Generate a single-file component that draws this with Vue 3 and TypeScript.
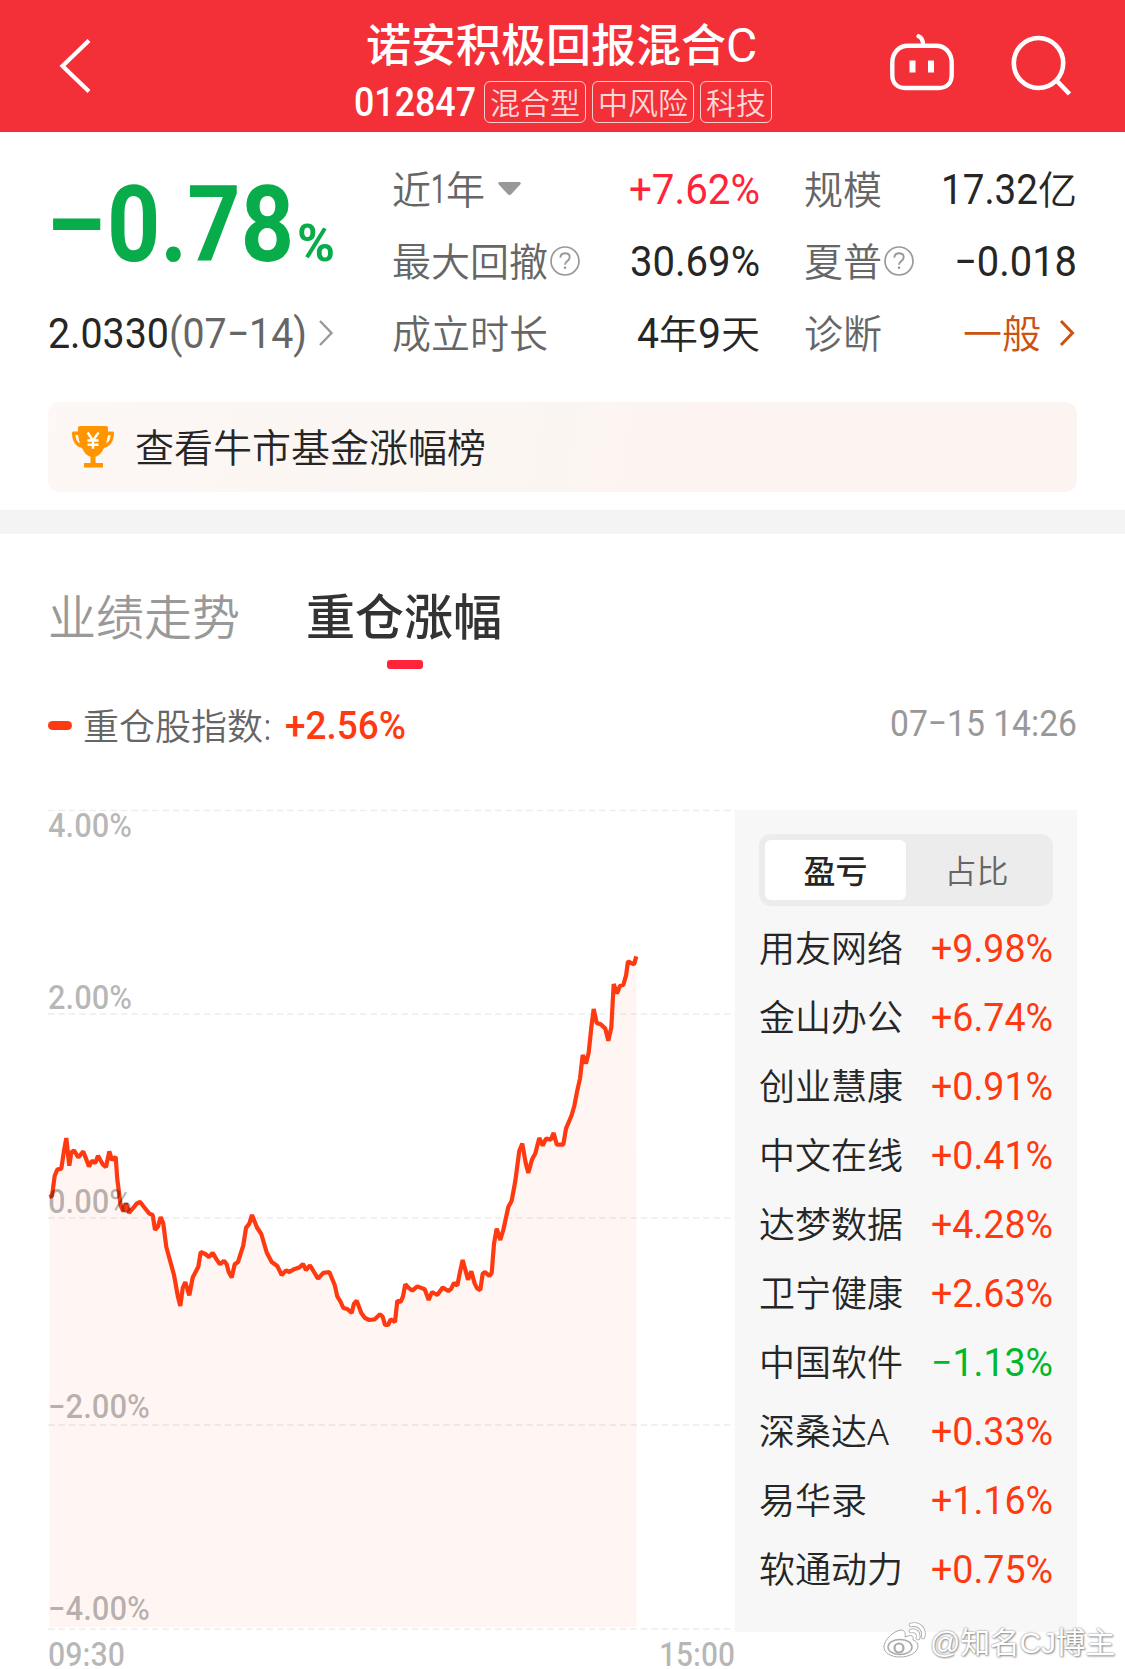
<script setup lang="ts">
import { h } from 'vue'
import type { FunctionalComponent } from 'vue'

interface NumProps {
  t: string
  w: number
  s: number
  b?: number
}

// Numeric label set to a fixed advance width; its box is the height of the digits.
const Num: FunctionalComponent<NumProps> = (props) => {
  const height = Math.round(props.s * 0.711)
  return h('svg', { width: props.w, height, style: 'display:block;overflow:visible;flex:none' }, [
    h(
      'text',
      {
        x: 0,
        y: height,
        'font-family': 'Roboto, "Noto Sans CJK SC", sans-serif',
        'font-size': props.s,
        'font-weight': props.b ?? 400,
        fill: 'currentColor',
        textLength: props.w,
        lengthAdjust: 'spacingAndGlyphs',
      },
      props.t,
    ),
  ])
}
Num.props = ['t', 'w', 's', 'b']

const tags: string[] = ['混合型', '中风险', '科技']

interface Stock {
  name: string
  change: string
}
const stocks: Stock[] = [
  { name: '用友网络', change: '+9.98%' },
  { name: '金山办公', change: '+6.74%' },
  { name: '创业慧康', change: '+0.91%' },
  { name: '中文在线', change: '+0.41%' },
  { name: '达梦数据', change: '+4.28%' },
  { name: '卫宁健康', change: '+2.63%' },
  { name: '中国软件', change: '−1.13%' },
  { name: '深桑达A', change: '+0.33%' },
  { name: '易华录', change: '+1.16%' },
  { name: '软通动力', change: '+0.75%' },
]

const gridLines: number[] = [810.5, 1014, 1218, 1425, 1629]
const axisLabels = [
  { t: '4.00%', y: 837, w: 84 },
  { t: '2.00%', y: 1008.5, w: 84 },
  { t: '0.00%', y: 1213, w: 84 },
  { t: '−2.00%', y: 1418, w: 102 },
  { t: '−4.00%', y: 1620, w: 102 },
]

const line =
  '49.3,1197 52,1196 54.7,1175.7 57.3,1169.6 61.3,1168.6 64,1150.7 66.3,1138 69.3,1165.7 71.3,1152.5 74,1150.4 78.3,1157.5 83.3,1151.4 89,1166.4 92,1160.7 95.3,1162.9 98,1155.7 102.7,1164.3 106,1167 109.3,1151.4 112,1160 115.7,1156.8 117.3,1179.3 120.7,1205.7 123.3,1211.4 126,1203.6 129,1212.9 133.3,1207.9 136.7,1203.6 140,1201.8 144,1207 149.3,1213.6 152.7,1215 155,1230 158,1226.4 160.7,1217 163.3,1223.6 166.3,1247 174,1275 178,1297 180.3,1306 182.7,1288 185.3,1282 189.3,1295.4 192.7,1277.5 198.3,1266.8 200.7,1252 205.3,1254 209,1257 212.7,1252.9 216.7,1259.6 220,1264.3 224,1260.7 226.7,1264.3 228.7,1272 231.7,1277.5 234.7,1264.3 238,1262 243.3,1245.4 246,1227.9 249.3,1223.6 252,1215 257,1227.5 261.3,1234 266.7,1252.5 271.7,1262 277.3,1266 281.7,1275 286,1270.4 289.3,1272 293.3,1269.6 299.3,1267.5 303,1264 306,1270 310,1265.4 314,1272 318,1278.6 323.3,1272.9 329.3,1272 334.7,1285 337.3,1296.4 340.7,1302 343.3,1308 347.3,1309 351.7,1312.9 354,1303.6 356.7,1300.7 361.3,1312.9 365,1318 369.3,1320 374.7,1319.3 380,1314.3 382.7,1316.8 385,1325 388,1325 390.7,1319.3 395,1322 397.3,1300.7 400.7,1302 403,1296.4 405.3,1284.3 408.7,1287.9 412.3,1290.7 417.3,1286.4 424.7,1289.3 428.7,1300 432,1292 437.3,1295 442.7,1287.5 448.3,1291 451.3,1288.6 454,1282.9 457.3,1285.7 460,1272 462.7,1260 468,1279.6 471.3,1271.4 474.7,1283.6 477.3,1288.6 480.3,1290 482.7,1273.6 485,1272 489.3,1276 491.7,1272.9 494,1243.6 496.7,1228.6 500.3,1240 503.3,1230 508.3,1207 511.7,1200.7 515.3,1181 519.3,1150.7 522.3,1143.6 525.7,1163 528.3,1172.9 532,1159.6 535.3,1153.6 539.3,1137.9 542.7,1145.7 546,1138.6 550.7,1139.6 553.7,1132.9 556.7,1144.6 563.3,1144.6 566,1128.6 571.7,1115 574.3,1106 577,1091.8 580,1078.6 582.7,1055 586,1063.6 588.7,1052.5 591.3,1027.5 593.7,1009 596.7,1022.9 600.7,1024.3 605.3,1028.6 608.3,1040.7 611.3,1027.5 613.7,984 617,993.6 620,985.7 623.3,985 626,975.7 628,961.4 634,964.3 636.3,956.4'
const area = `49.3,1627 ${line} 636.6,1627`
</script>

<template>
  <div class="page">
    <header class="header">
      <svg class="back" width="34" height="58" viewBox="0 0 34 58" fill="none" stroke="#fff" stroke-width="4.200">
        <path d="M31 3.500 4.500 29l26.500 25.500" />
      </svg>
      <div class="heading">
        <h1 class="title">诺安积极回报混合<span class="latin">C</span></h1>
        <div class="meta">
          <Num t="012847" :w="122" :s="40" :b="500" />
          <span v-for="tag in tags" :key="tag" class="tag">{{ tag }}</span>
        </div>
      </div>
      <div class="actions">
        <svg class="robot" width="64" height="60" viewBox="0 0 64 60" fill="none" stroke="#fff" stroke-width="4.400">
          <path d="M18 12.700h28c9 0 15.700 7 15.700 17v12c0 8.500-5 13.300-13 13.300H15.300c-8 0-13-4.800-13-13.300v-12c0-10 6.700-17 15.700-17Z" />
          <path d="M28.500 3.200c3.300 1.200 4.600 4 4.600 9" stroke-linecap="round" />
          <path d="M22.500 27.500v12M41 27.500v12" stroke-width="6" />
        </svg>
        <svg width="62" height="62" viewBox="0 0 62 62" fill="none" stroke="#fff" stroke-width="4.600">
          <ellipse cx="28.500" cy="29" rx="24.700" ry="25" />
          <path d="m46 46 13.500 14" />
        </svg>
      </div>
    </header>

    <section class="summary">
      <div class="daily">
        <div class="big">
          <Num t="−" :w="62" :s="105" :b="700" />
          <Num t="0.78" :w="187" :s="105" :b="700" />
          <Num class="percent" t="%" :w="38" :s="51" :b="700" />
        </div>
        <div class="nav">
          <Num t="2.0330" :w="121" :s="42" />
          <Num class="date" t="(07−14)" :w="138" :s="42" />
          <svg class="arrow" width="16" height="28" viewBox="0 0 16 28" fill="none" stroke="#999" stroke-width="2.400">
            <path d="m2 2 11.500 12L2 26" />
          </svg>
        </div>
      </div>

      <div class="stats first">
        <div class="stat">
          <span class="label">近<Num t="1" :w="15" :s="40" />年
            <svg class="caret" width="23" height="14" viewBox="0 0 23 14"><path d="M2 0h19c1.700 0 2.300 1.500 1.200 2.600l-9 9.600c-1 1-2.400 1-3.400 0l-9-9.600C-.3 1.500.3 0 2 0Z" fill="#999" /></svg>
          </span>
          <span class="value up"><Num t="+7.62%" :w="131" :s="42" /></span>
        </div>
        <div class="stat">
          <span class="label">最大回撤
            <svg class="help" width="30" height="30" viewBox="0 0 30 30" fill="none" stroke="#999" stroke-width="1.700"><circle cx="15" cy="15" r="14" /><path d="M10.400 11.800c0-2.700 1.900-4.500 4.700-4.500s4.600 1.700 4.600 4c0 2-1.200 2.900-2.600 4-1.300 1-2 1.700-2 3.400" stroke-width="1.900" /><circle cx="15" cy="21.800" r="1.300" fill="#999" stroke="none" /></svg>
          </span>
          <span class="value"><Num t="30.69%" :w="130" :s="42" /></span>
        </div>
        <div class="stat">
          <span class="label">成立时长</span>
          <span class="value"><Num t="4" :w="22" :s="42" />年<Num t="9" :w="23" :s="42" />天</span>
        </div>
      </div>

      <div class="stats second">
        <div class="stat">
          <span class="label">规模</span>
          <span class="value"><Num t="17.32" :w="97" :s="42" />亿</span>
        </div>
        <div class="stat">
          <span class="label">夏普
            <svg class="help" width="30" height="30" viewBox="0 0 30 30" fill="none" stroke="#999" stroke-width="1.700"><circle cx="15" cy="15" r="14" /><path d="M10.400 11.800c0-2.700 1.900-4.500 4.700-4.500s4.600 1.700 4.600 4c0 2-1.200 2.900-2.600 4-1.300 1-2 1.700-2 3.400" stroke-width="1.900" /><circle cx="15" cy="21.800" r="1.300" fill="#999" stroke="none" /></svg>
          </span>
          <span class="value"><Num t="−0.018" :w="123" :s="42" /></span>
        </div>
        <div class="stat">
          <span class="label">诊断</span>
          <span class="value verdict">一般
            <svg width="16" height="28" viewBox="0 0 16 28" fill="none" stroke="currentColor" stroke-width="3"><path d="m2 2 11.500 12L2 26" /></svg>
          </span>
        </div>
      </div>
    </section>

    <div class="banner">
      <svg width="42" height="42" viewBox="0 0 42 42" fill="#ff9500">
        <path d="M8 0h26c1.200 0 2 .8 2 2v3.500h4.500c1 0 1.500.6 1.500 1.500 0 8-3.500 13.500-10 15-2 4.500-4.800 7.700-8.500 8.800V37H31v4.500H12V37h6.500v-6.200c-3.800-1.100-6.500-4.300-8.500-8.800C3.500 20.500 0 15 0 7c0-.9.600-1.500 1.500-1.500H6V2c0-1.200.8-2 2-2Z" />
        <path d="M3.500 9H6l1.800 8.500C5 16 3.500 13 3.500 9ZM38.500 9H36l-1.800 8.500C37 16 38.500 13 38.500 9Z" fill="#fdf7f4" />
        <path d="m15.500 6.500 5.500 8 5.500-8M15.500 14.500h11M15.500 18.700h11M21 14v8.800" fill="none" stroke="#fff" stroke-width="2.400" />
      </svg>
      <span class="banner-text">查看牛市基金涨幅榜</span>
    </div>
    <div class="gap"></div>

    <nav class="tabs">
      <span class="tab">业绩走势</span>
      <span class="tab active">重仓涨幅</span>
    </nav>

    <div class="legend">
      <i class="dash"></i>
      <span class="legend-name">重仓股指数:</span>
      <Num class="legend-value" t="+2.56%" :w="121" :s="39" :b="500" />
      <Num class="time" t="07−15 14:26" :w="187" :s="37" />
    </div>

    <main class="board">
      <svg class="chart" width="687" height="863" viewBox="48 806 687 863">
        <line v-for="y in gridLines" :key="y" x1="48" x2="735" :y1="y" :y2="y" stroke="#ededed" stroke-width="1.500" stroke-dasharray="6.500 3.900" />
        <polygon :points="area" fill="#ff3910" fill-opacity=".05" />
        <polyline :points="line" fill="none" stroke="#ff3910" stroke-width="4.200" stroke-linejoin="bevel" />
        <g font-family="Roboto, sans-serif" font-size="32.500" font-weight="500" fill="#000" fill-opacity=".29">
          <text v-for="a in axisLabels" :key="a.t" x="48" :y="a.y" :textLength="a.w" lengthAdjust="spacingAndGlyphs">{{ a.t }}</text>
          <text x="48" y="1665.500" textLength="77" lengthAdjust="spacingAndGlyphs">09:30</text>
          <text x="659" y="1665.500" textLength="76" lengthAdjust="spacingAndGlyphs">15:00</text>
        </g>
      </svg>
      <aside class="side">
        <div class="segment">
          <span class="option on">盈亏</span>
          <span class="option">占比</span>
        </div>
        <div v-for="s in stocks" :key="s.name" class="stock">
          <span class="stock-name">{{ s.name }}</span>
          <Num :class="s.change[0] === '+' ? 'gain' : 'loss'" :t="s.change" :w="122" :s="39" />
        </div>
      </aside>
    </main>

    <div class="watermark">
      <svg width="44" height="36" viewBox="0 0 44 36">
        <path d="M18 8C10 9 1 18 1 25c0 6 7 10 16 10 10 0 18-5 18-11 0-3-2-5-5-6 1-4-1-6-8-3 1-5-1-7-4-7Z" fill="#fff" stroke="#aaa" />
        <ellipse cx="17" cy="25" rx="12" ry="7.500" fill="#fff" stroke="#aaa" stroke-width="1.500" />
        <circle cx="16" cy="26" r="4.500" fill="none" stroke="#aaa" stroke-width="2.200" />
        <path d="M28 3c8-2 14 4 12 12M28 9c5-1 8 2 7 7" fill="none" stroke="#aaa" stroke-width="4.600" stroke-linecap="round" />
        <path d="M28 3c8-2 14 4 12 12M28 9c5-1 8 2 7 7" fill="none" stroke="#fff" stroke-width="3" stroke-linecap="round" />
      </svg>
      <span class="handle">@知名CJ博主</span>
    </div>
  </div>
</template>

<style>
body {
  background: #fff;
  overflow: hidden;
}
</style>

<style scoped>
.page {
  position: relative;
  width: 1125px;
  height: 1669px;
  overflow: hidden;
  background: #fff;
  color: #262626;
  font-family: 'Noto Sans', 'Noto Sans CJK SC', sans-serif;
  font-weight: 400;
}
.header {
  box-sizing: border-box;
  display: grid;
  grid-template-columns: 354px 1fr 353px;
  height: 132px;
  background: #f33037;
  color: #fff;
}
.back {
  margin: 37px 0 0 58px;
}
.heading {
  padding-top: 22px;
}
.title {
  margin: 0;
  padding-left: 12px;
  height: 50px;
  line-height: 50px;
  font-family: Roboto, 'Noto Sans CJK SC', sans-serif;
  font-size: 45px;
  font-weight: 500;
  white-space: nowrap;
}
.latin {
  font-size: 48px;
  font-weight: 450;
  line-height: 1;
}
.meta {
  display: flex;
  align-items: center;
  gap: 6px;
  margin-top: 9px;
  height: 42px;
}
.meta > svg {
  margin-right: 2px;
}
.tag {
  box-sizing: border-box;
  height: 42px;
  padding: 0 5px;
  border: 1px solid rgba(255, 255, 255, 0.75);
  border-radius: 6px;
  line-height: 41px;
  font-size: 30px;
  font-weight: 350;
  color: rgba(255, 255, 255, 0.82);
  white-space: nowrap;
}
.actions {
  display: flex;
  align-items: flex-start;
  gap: 56px;
  padding: 34px 0 0 118px;
}
.robot {
  margin-top: -1px;
}
.summary {
  display: flex;
  height: 270px;
}
.daily {
  width: 392px;
}
.big {
  display: flex;
  align-items: flex-end;
  padding: 54px 0 0 45px;
  color: #09ac4b;
}
.percent {
  margin-left: 3px;
}
.nav {
  display: flex;
  align-items: center;
  margin: 57px 0 0 48px;
}
.date {
  color: #666;
}
.arrow {
  margin-left: 11px;
}
.stats {
  display: flex;
  flex-direction: column;
  padding-top: 21px;
  font-size: 39px;
}
.first {
  width: 368px;
}
.second {
  width: 273px;
  margin-left: 44px;
}
.stat {
  display: flex;
  justify-content: space-between;
  align-items: center;
  height: 72px;
  line-height: 72px;
  white-space: nowrap;
}
.label,
.value {
  display: flex;
  align-items: center;
  color: #666;
  font-weight: 350;
}
.value {
  color: #262626;
}
.caret {
  margin-left: 13px;
}
.help {
  margin-left: 2px;
}
.value.up {
  color: #ff2439;
}
.value.verdict {
  gap: 18px;
  padding-right: 2px;
  color: #cc5212;
}
.banner {
  display: flex;
  align-items: center;
  gap: 22px;
  width: 981px;
  height: 90px;
  margin-left: 48px;
  padding: 0 24px;
  border-radius: 12px;
  background: linear-gradient(100deg, #fdf7f5, #fbf6f2 45%, #fdf4f1 62%, #fcf4f1);
  font-size: 39px;
  font-weight: 350;
}
.banner-text {
  margin: 0 0 4px -1px;
}
.gap {
  height: 24px;
  margin-top: 18px;
  background: #f4f4f4;
}
.tabs {
  display: flex;
  gap: 66px;
  height: 135px;
  padding-left: 48px;
  line-height: 165px;
}
.tab {
  font-size: 48px;
  font-weight: 350;
  color: #999;
}
.tab.active {
  position: relative;
  font-size: 49px;
  font-weight: 500;
  color: #333;
}
.tab.active::after {
  content: '';
  position: absolute;
  left: 50%;
  bottom: 0;
  width: 36px;
  height: 9px;
  margin-left: -17px;
  border-radius: 3px;
  background: #ff2439;
}
.legend {
  display: flex;
  align-items: center;
  height: 113px;
  margin: 0 48px;
}
.dash {
  width: 24px;
  height: 9px;
  border-radius: 4.5px;
  background: #ff3910;
}
.legend-name {
  margin: 0 0 2px 11px;
  font-size: 36px;
  font-weight: 350;
  color: #666;
}
.legend-value {
  margin: 0 0 2px 13px;
  color: #ff3910;
}
.time {
  margin: 0 0 5px auto;
  color: #999;
}
.board {
  display: flex;
  align-items: flex-start;
  margin: 24px 0 0 48px;
}
.chart {
  flex: none;
}
.side {
  box-sizing: border-box;
  width: 342px;
  height: 822px;
  margin-top: 4px;
  padding: 24px 24px 0;
  background: #f7f7f7;
}
.segment {
  display: flex;
  height: 60px;
  margin-bottom: 7px;
  padding: 6px;
  border-radius: 12px;
  background: #ececec;
}
.option {
  flex: 1;
  border-radius: 6px;
  line-height: 61px;
  font-size: 32px;
  font-weight: 350;
  text-align: center;
  color: #666;
}
.option.on {
  background: #fff;
  color: #262626;
  font-weight: 500;
}
.stock {
  display: flex;
  justify-content: space-between;
  align-items: center;
  height: 69px;
  font-size: 36px;
  font-weight: 350;
  white-space: nowrap;
}
.stock-name {
  margin-top: 2px;
  line-height: 66px;
}
.gain {
  color: #ff3910;
}
.loss {
  color: #00b82b;
}
.watermark {
  position: absolute;
  left: 883px;
  top: 1618px;
  display: flex;
  align-items: center;
  gap: 3px;
  height: 44px;
  font-family: 'Liberation Sans', 'Noto Sans CJK SC', sans-serif;
  font-size: 30px;
  color: #fff;
  text-shadow: 0 0 2px #777, 1px 1px 2px #999;
  white-space: nowrap;
}
.handle {
  margin-top: 5px;
  line-height: 44px;
  letter-spacing: -0.3px;
}
</style>
